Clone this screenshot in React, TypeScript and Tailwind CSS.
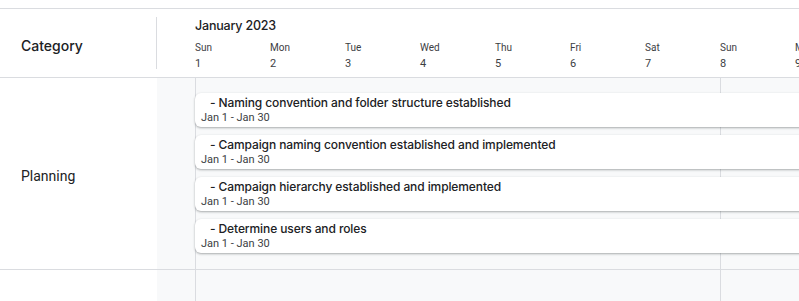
import React from "react";

const days = [
  { name: "Sun", num: 1 },
  { name: "Mon", num: 2 },
  { name: "Tue", num: 3 },
  { name: "Wed", num: 4 },
  { name: "Thu", num: 5 },
  { name: "Fri", num: 6 },
  { name: "Sat", num: 7 },
  { name: "Sun", num: 8 },
  { name: "Mon", num: 9 },
  { name: "Tue", num: 10 },
];

const tasks = [
  "- Naming convention and folder structure established",
  "- Campaign naming convention established and implemented",
  "- Campaign hierarchy established and implemented",
  "- Determine users and roles",
];

export default function App() {
  return (
    <div className="h-[301px] w-full overflow-hidden bg-white pt-2 font-['Roboto',sans-serif] text-[#202124]">
      {/* Header */}
      <div className="flex h-[70px] border-y border-[#dadce0]">
        <div className="flex w-[157px] shrink-0 items-center">
          <div className="flex h-[52px] w-full items-center border-r border-[#dadce0] pl-[21px] pt-[5px] font-['Inter',sans-serif] text-[14px] font-medium">
            Category
          </div>
        </div>
        <div className="flex min-w-0 flex-1 flex-col overflow-hidden pl-[38px] pt-[7px]">
          <div className="h-5 font-['Inter',sans-serif] text-[12.5px] font-medium leading-5 tracking-[-0.2px]">January 2023</div>
          <div className="mt-[5px] flex">
            {days.map((d, i) => (
              <div key={i} className="w-[75px] shrink-0 text-[#3c4043]">
                <div className="text-[10px] leading-[14px]">{d.name}</div>
                <div className="mt-px text-[11px] leading-4">{d.num}</div>
              </div>
            ))}
          </div>
        </div>
      </div>

      {/* Planning row */}
      <div className="flex h-[192px] border-b border-[#dadce0]">
        <div className="flex w-[157px] shrink-0 items-center pl-[21px] pt-[5px] text-[14px]">Planning</div>
        <div className="relative min-w-0 flex-1 overflow-hidden bg-[#f8f9fa] pl-[38px]">
          <div className="absolute bottom-0 left-[38px] top-0 w-px bg-[#dadce0]" />
          <div className="absolute bottom-0 left-[563px] top-0 w-px bg-[#dadce0]" />
          <div className="relative flex flex-col gap-2 pt-[15px]">
            {tasks.map((t) => (
              <div
                key={t}
                className="h-[34px] w-[2250px] rounded-l-md bg-white pl-[6px] pt-px shadow-[0_1px_2px_rgba(60,64,67,0.3),0_1px_3px_rgba(60,64,67,0.15)]"
              >
                <div className="pl-[9px] font-['Inter',sans-serif] text-[12px] font-medium leading-[17px] tracking-[-0.1px]">{t}</div>
                <div className="text-[11px] leading-[14px] text-[#3c4043]">Jan 1 - Jan 30</div>
              </div>
            ))}
          </div>
        </div>
      </div>

      {/* Empty row */}
      <div className="flex h-[40px]">
        <div className="w-[157px] shrink-0" />
        <div className="relative flex-1 bg-[#f8f9fa]">
          <div className="absolute bottom-0 left-[38px] top-0 w-px bg-[#dadce0]" />
          <div className="absolute bottom-0 left-[563px] top-0 w-px bg-[#dadce0]" />
        </div>
      </div>
    </div>
  );
}
